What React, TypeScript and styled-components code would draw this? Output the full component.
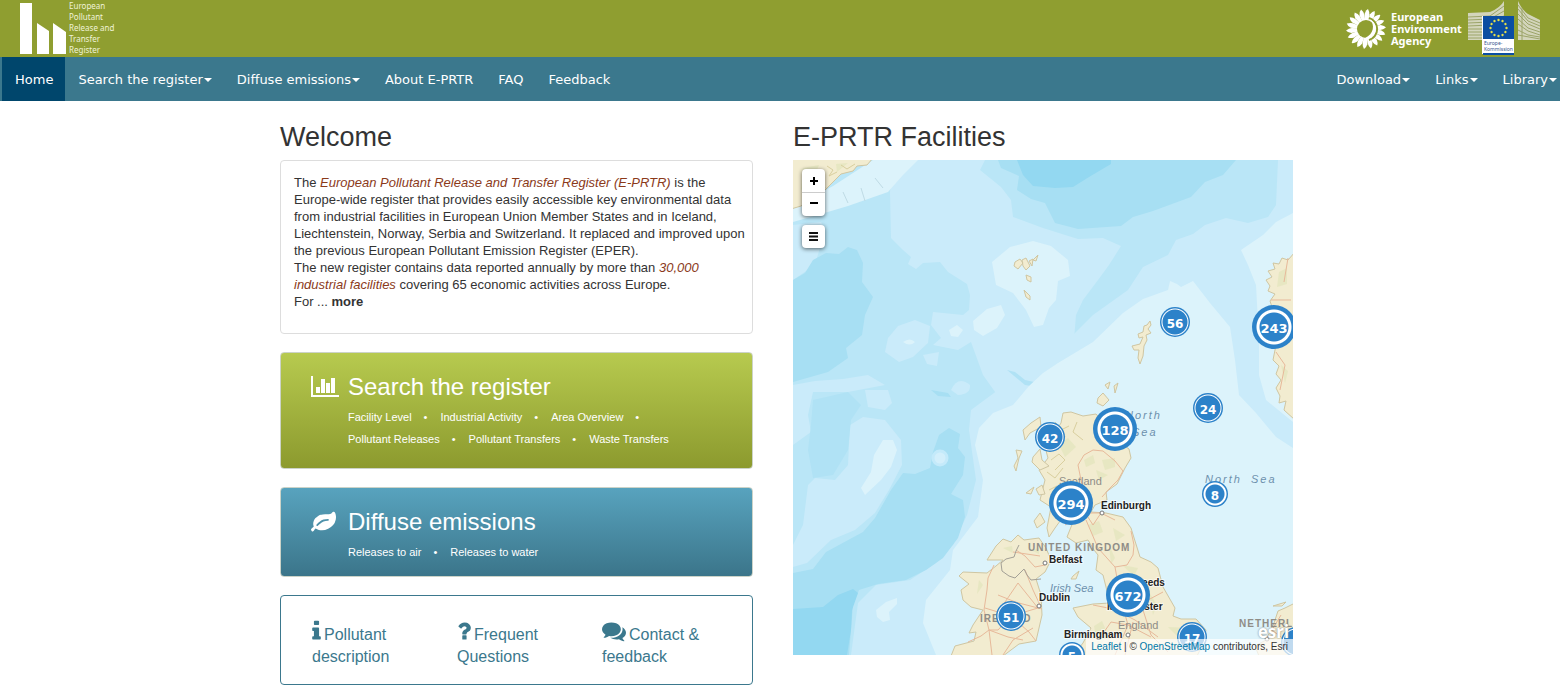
import React from 'react';
import styled, { createGlobalStyle } from 'styled-components';

const GlobalStyle = createGlobalStyle`
  * { box-sizing: border-box; }
  body { margin: 0; background: #fff; color: #333; font: 13px/17px "Liberation Sans", Arial, sans-serif; }
  a { color: inherit; text-decoration: none; }
  ul { list-style: none; margin: 0; padding: 0; }
`;

const Header = styled.header`
  display: flex;
  justify-content: space-between;
  align-items: flex-start;
  height: 57px;
  padding: 0 18px 0 20px;
  background: #8f9e30;
  color: #fff;
`;
const Brand = styled.a`
  display: flex;
  gap: 3px;
  font: 8px/11px "Noto Sans", sans-serif;
  color: #f0f3d8;
`;
const BrandText = styled.span`
  width: 48px;
`;
const Partners = styled.div`
  display: flex;
  align-items: flex-start;
`;
const Agency = styled.a`
  display: flex;
  gap: 5px;
  padding-top: 7px;
  font: bold 11px/12px "Noto Sans", sans-serif;
`;
const AgencyText = styled.span`
  width: 77px;
  padding-top: 4px;
`;

const Nav = styled.nav`
  display: flex;
  justify-content: space-between;
  height: 44px;
  padding-left: 2px;
  background: #3b788d;
`;
const NavGroup = styled.div<{ $tight?: boolean }>`
  display: flex;
  margin-right: ${p => (p.$tight ? '-9px' : '0')};
`;
const NavLink = styled.a<{ $active?: boolean }>`
  display: flex;
  align-items: center;
  gap: 1px;
  padding: 2px 12px 0 13px;
  background: ${p => (p.$active ? '#00466c' : 'transparent')};
  color: #fff;
  font: 13px/20px "DejaVu Sans", Verdana, sans-serif;
  white-space: nowrap;
`;
const Caret = styled.span`
  border: 4px solid transparent;
  border-top-color: #fff;
  border-bottom: 0;
`;

const Main = styled.main`
  display: grid;
  grid-template-columns: 473fr 500fr;
  gap: 40px;
  max-width: 1170px;
  margin: 0 auto;
  padding: 21px 72px 6px 85px;
`;
const Column = styled.section`
  display: flex;
  flex-direction: column;
  min-width: 0;
`;
const Heading = styled.h1`
  margin: 0 0 8px;
  font-size: 27px;
  line-height: 30px;
  font-weight: 400;
`;
const Stack = styled.div`
  display: flex;
  flex-direction: column;
  gap: 18px;
`;
const Intro = styled.div`
  padding: 13px 5px 23px 13px;
  border: 1px solid #ddd;
  border-radius: 4px;
  p { margin: 0; }
  em { color: #8b3a1a; }
`;
const Feature = styled.section<{ $from: string; $to: string; $bottom: number }>`
  padding: 20px 30px ${p => p.$bottom}px;
  border: 1px solid #ccd3c8;
  border-radius: 4px;
  background: linear-gradient(${p => p.$from}, ${p => p.$to});
  color: #fff;
`;
const FeatureTitle = styled.h2`
  display: flex;
  align-items: center;
  margin: 0 0 5px;
  font-size: 24px;
  line-height: 28px;
  font-weight: 400;
`;
const IconSlot = styled.span`
  display: flex;
  width: 37px;
`;
const FeatureLinks = styled.ul`
  padding-left: 37px;
  font-size: 11px;
  line-height: 22px;
  li { display: inline-block; }
  li:not(:last-child)::after { content: "•"; margin: 0 13px 0 12px; }
`;
const HelpPanel = styled.ul`
  display: grid;
  grid-template-columns: repeat(3, 1fr);
  padding: 23px 5px 16px 31px;
  border: 1px solid #3b788d;
  border-radius: 4px;
  color: #3b788d;
  font-size: 16px;
  line-height: 22px;
  svg { height: 24px; margin-right: 3px; vertical-align: -3px; }
`;

const MapBox = styled.div`
  position: relative;
  height: 495px;
  overflow: hidden;
  background: #bae6f7;
`;
const MapArt = styled.svg`
  display: block;
  width: 100%;
  height: 100%;
`;
const MapControls = styled.div`
  position: absolute;
  top: 9px;
  left: 9px;
  display: flex;
  flex-direction: column;
  gap: 9px;
`;
const ControlGroup = styled.div`
  width: 23px;
  border-radius: 4px;
  background: #fff;
  box-shadow: 0 1px 4px rgba(0, 0, 0, 0.6);
`;
const ControlButton = styled.button`
  display: flex;
  align-items: center;
  justify-content: center;
  width: 23px;
  height: 23px;
  padding: 0;
  border: 0;
  background: none;
  color: #000;
  & + & { border-top: 1px solid #ccc; height: 24px; }
`;
const Cluster = styled.button<{ $x: number; $y: number; $r: number; $kind: Kind }>`
  position: absolute;
  left: ${p => p.$x - p.$r}px;
  top: ${p => p.$y - p.$r}px;
  display: flex;
  align-items: center;
  justify-content: center;
  width: ${p => p.$r * 2}px;
  height: ${p => p.$r * 2}px;
  padding: 3px 0 0;
  border: 0;
  border-radius: 50%;
  color: #fff;
  font: bold ${p => (p.$kind === 'large' ? 13 : 12)}px/14px "DejaVu Sans", Verdana, sans-serif;
  background: ${p => rings[p.$kind]};
`;
const EsriMark = styled.span`
  position: absolute;
  right: 4px;
  bottom: 12px;
  color: #fff;
  font: bold 17px/22px "Noto Sans", sans-serif;
  text-shadow: 0 0 2px #777;
`;
const Attribution = styled.div`
  position: absolute;
  right: 0;
  bottom: 0;
  padding: 0 5px;
  background: rgba(255, 255, 255, 0.7);
  font-size: 10px;
  line-height: 16px;
  white-space: nowrap;
  a { color: #0078a8; }
`;

type Kind = 'small' | 'medium' | 'large';
const blue = '#2c82c9';
const rings: Record<Kind, string> = {
  small: `radial-gradient(circle closest-side, ${blue} 9px, #fff 10px, #fff 11px, ${blue} 12px)`,
  medium: `radial-gradient(circle closest-side, ${blue} 12px, #fff 13px, #fff 13px, ${blue} 14px)`,
  large: `radial-gradient(circle closest-side, ${blue} 14px, #fff 15px, #fff 17px, ${blue} 18px)`,
};
const radius: Record<Kind, number> = { small: 13, medium: 15, large: 22 };

const clusters: { n: string; x: number; y: number; kind: Kind }[] = [
  { n: '56', x: 382, y: 162, kind: 'medium' },
  { n: '243', x: 481, y: 167, kind: 'large' },
  { n: '24', x: 415, y: 248, kind: 'medium' },
  { n: '128', x: 322, y: 269, kind: 'large' },
  { n: '42', x: 257, y: 277, kind: 'medium' },
  { n: '8', x: 422, y: 334, kind: 'small' },
  { n: '294', x: 278, y: 343, kind: 'large' },
  { n: '672', x: 335, y: 435, kind: 'large' },
  { n: '51', x: 218, y: 456, kind: 'medium' },
  { n: '17', x: 399, y: 477, kind: 'medium' },
  { n: '5', x: 279, y: 495, kind: 'small' },
  { n: '', x: 503, y: 482, kind: 'medium' },
];

const Chimneys = () => (
  <svg width="46" height="57" viewBox="0 0 46 57" fill="#fff" aria-hidden="true">
    <path d="M0 3h12v51H0zM17 23l12 8v23H17zM33 23l13 9v22H33z" />
  </svg>
);

const Sunflower = () => (
  <svg width="40" height="44" viewBox="-20 -22 40 44" fill="#fff" aria-hidden="true">
    {Array.from({ length: 18 }, (_, i) => (
      <path key={i} d="M-1.6-8L-2.4-15Q-1.4-19 0.6-20Q2.6-17 2.4-14L1.6-8Z" transform={`rotate(${i * 20 + 4})`} />
    ))}
    <circle r="9" fill="#8f9e30" />
    <path d="M3-11A11.500 11.500 0 0 1 3 11" fill="none" stroke="#8f9e30" strokeWidth="2" />
    <path d="M4-10C12-5 12 6 2 10L-1 9C8 5 9-4 4-10Z" />
  </svg>
);

const Commission = () => (
  <svg width="74" height="56" viewBox="0 0 74 56" role="img" aria-label="Europe-Kommission">
    <path d="M0 13L22 12Q32 8 36 1V40H0ZM50 1Q54 10 60 14L72 20V40H50Z" fill="#d3d5bb" />
    <g fill="none" stroke="#9ca469" strokeWidth="1">
      <path d="M0 17L22 16L36 6M0 20L22 19L36 11M0 23L22 22L36 16M0 26L22 25L36 20M0 29H36M0 32H36M0 35H36M0 38H36" />
      <path d="M50 5L60 18L72 23M50 9L60 21L72 26M50 14L60 24L72 29M50 19L60 28L72 32M50 24L60 31L72 35M50 30L60 35L72 37M50 35L72 39M54 8V40" />
    </g>
    <path d="M14 16H46V54H14Z" fill="#fff" />
    <path d="M15 16H46V39H15ZM15 53H46V55H15Z" fill="#0b4ea2" />
    {Array.from({ length: 12 }, (_, i) => (
      <circle key={i} cx="30.5" cy="20" r="1.2" fill="#e6e04a" transform={`rotate(${i * 30} 30.5 28)`} />
    ))}
    <g fill="#35538c" fontFamily="Noto Sans, sans-serif" fontSize="5">
      <text x="16" y="45">Europe-</text>
      <text x="16" y="51">Kommission</text>
    </g>
  </svg>
);

const BarsIcon = () => (
  <svg width="28" height="22" viewBox="0 0 28 22" fill="#fff" aria-hidden="true">
    <path d="M0 0H2V19H28V21H0ZM5 11H9V17H5ZM10 3H14V17H10ZM15 7H19V17H15ZM20 2H24V17H20Z" />
  </svg>
);
const LeafIcon = () => (
  <svg width="25" height="25" viewBox="0 0 1792 1792" fill="#fff" aria-hidden="true">
    <path d="M1280 704q0-26-19-45t-45-19q-172 0-318 49.5t-259.5 134-235.5 219.5q-19 21-19 45 0 26 19 45t45 19q24 0 45-19 27-24 74-71t67-66q137-124 268.5-176t313.5-52q26 0 45-19t19-45zm512-198q0 95-20 193-46 224-184.5 383t-357.5 268q-214 108-438 108-148 0-286-47-15-5-88-42t-96-37q-16 0-39.5 32t-45 70-52.5 70-60 32q-43 0-63.5-17.5t-45.5-59.5q-2-4-6-11t-5.5-10-3-9.5-1.5-13.5q0-35 31-73.5t68-65.5 68-56 31-48q0-4-14-38t-16-44q-9-51-9-104 0-115 43.5-220t119-184.5 170.5-139 204-95.5q55-18 145-25.5t179.5-9 178.5-6 163.5-24 113.5-56.5l29.5-29.5 29.5-28 27-20 36.5-16 43.5-4.5q39 0 70.5 46t47.5 112 24 124 8 96z" />
  </svg>
);
const InfoIcon = () => (
  <svg width="9" viewBox="576 0 640 1792" fill="currentColor" aria-hidden="true">
    <path d="M1216 1344v128q0 26-19 45t-45 19h-512q-26 0-45-19t-19-45v-128q0-26 19-45t45-19h64v-384h-64q-26 0-45-19t-19-45v-128q0-26 19-45t45-19h384q26 0 45 19t19 45v576h64q26 0 45 19t19 45zm-128-1152v192q0 26-19 45t-45 19h-256q-26 0-45-19t-19-45v-192q0-26 19-45t45-19h256q26 0 45 19t19 45z" />
  </svg>
);
const QuestionIcon = () => (
  <svg width="14" viewBox="384 0 1024 1792" fill="currentColor" aria-hidden="true">
    <path d="M1088 1256v240q0 16-12 28t-28 12h-240q-16 0-28-12t-12-28v-240q0-16 12-28t28-12h240q16 0 28 12t12 28zm316-600q0 54-15.5 101t-35 76.5-55 59.5-57.5 43.5-61 35.5q-41 23-68.5 65t-27.5 67q0 17-12 32.5t-28 15.5h-240q-15 0-25.5-18.5t-10.5-37.5v-45q0-83 65-156.5t143-108.5q59-27 84-56t25-76q0-42-46.5-74t-107.5-32q-65 0-108 29-35 25-107 115-13 16-31 16-12 0-25-8l-164-125q-13-10-15.5-25t5.5-28q160-266 464-266 80 0 161 31t146 83 106 127.5 41 158.5z" />
  </svg>
);
const CommentsIcon = () => (
  <svg width="24" viewBox="0 0 1792 1792" fill="currentColor" aria-hidden="true">
    <path d="M1408 768q0 139-94 257t-256.5 186.5-353.5 68.5q-86 0-176-16-124 88-278 128-36 9-86 16h-3q-11 0-20.5-8t-11.5-21q-1-3-1-6.5t.5-6.5 2-6l2.5-5 3.5-5.5 4-5 4.5-5 4-4.5q5-6 23-25t26-29.5 22.5-29 25-38.5 20.5-44q-124-72-195-177t-71-224q0-139 94-257t256.5-186.5 353.5-68.5 353.5 68.5 256.5 186.5 94 257zm384 256q0 120-71 224.5t-195 176.5q10 24 20.5 44t25 38.5 22.5 29 26 29.5 23 25q1 1 4 4.5t4.5 5 4 5 3.5 5.5l2.5 5 2 6 .5 6.5-1 6.5q-3 14-13 22t-22 7q-50-7-86-16-154-40-278-128-90 16-176 16-271 0-472-132 58 4 88 4 161 0 309-45t264-129q125-92 192-212t67-254q0-77-23-152 129 71 204 178t75 230z" />
  </svg>
);

const SeaMap = () => (
  <MapArt viewBox="0 0 500 495" preserveAspectRatio="xMinYMin slice" role="img" aria-label="Map of the North Sea region">
    <rect width="500" height="495" fill="#bae6f7" />
    {/* mid-depth water */}
    <g fill="#caebfa">
      <path d="M100 0L97 32L98 78L110 90L118 97L115 104L123 109L130 103L147 102L155 112L174 124L177 135L176 150L170 155L140 152L138 165L148 178L140 185L165 190L178 182L190 215L205 236L223 246L235 232L228 222L250 220L270 196L281 180L283 155L290 140L305 120L316 105L328 86L310 78L285 79L250 68L220 57L218 40L208 27L187 10L192 0Z" />
      <path d="M500 0H485L483 45L475 57L455 63L433 58L412 65L400 74L383 80L375 95L350 107L335 130L300 155L280 175L250 195L230 216L205 230L178 250L176 270L183 320L174 355L160 385L143 403L117 420L83 425L65 443L58 495H500Z" />
      <path d="M57 265L70 257L92 260L108 280L109 305L96 330L82 353L62 370L38 380L14 403L0 407V385L10 365L15 325L22 318L42 320L55 305Z" />
      <path d="M72 230L95 230L99 243L92 250L75 247ZM92 192L95 178L105 166L122 160L137 166L135 183L120 197L106 202ZM130 195L146 192L144 206L134 204ZM0 225L22 221L50 219L75 215L92 225L55 232L20 232L15 255L18 272L0 285ZM0 65L28 62L32 70L22 105L0 120Z" />
      <path d="M158 230Q165 215 177 225Q178 234 165 235Z" />
      <circle cx="36" cy="308" r="3" />
    </g>
    {/* deep water */}
    <g fill="#a7dff3">
      <path d="M0 120L12 113L20 100L33 93L46 94L55 87L64 90L70 103L69 122L80 137L72 155L69 175L53 188L55 198L35 212L0 222Z" />
      <path d="M110 313L122 314L137 308L140 292L146 275L156 268L167 274L165 288L172 297L170 315L158 334L170 340L172 357L165 378L150 398L133 410L113 420L85 424L66 430L60 445L56 495H0V413L20 409L33 392L70 372L82 358L98 330Z" />
      <path d="M205 0L208 8L226 16L224 30L238 39L252 43L262 63L285 69L328 66L340 57L360 51L398 37L412 22L430 15L443 0Z" />
      <path d="M138 230L155 233L158 237L145 236Z" />
    </g>
    <path d="M20 240L55 232L68 245L58 260L55 290L40 315L20 318L15 290L18 265ZM214 210L222 212L232 220L250 224L250 228L232 225Z" fill="#b0e2f5" />
    <g fill="#93d8f1">
      <path d="M0 449L30 447L45 435L60 429L65 433L59 450L58 470L54 495H0Z" />
      <path d="M224 0L230 15L240 26L262 28L280 27L296 17L318 4L318 0Z" />
    </g>
    {/* continental shelf and banks */}
    <g fill="#dcf3fb">
      <path d="M0 48L0 62L28 54L55 46L95 32L110 15L125 0H80L40 26Z" />
      <path d="M500 53L483 62L470 75L448 90L455 105L463 125L466 180L466 215L473 240L500 262ZM250 213L265 203L300 182L330 153L350 139L375 130L377 121L384 124L388 127L400 121L417 143L437 167L442 200L446 235L463 253L483 277L500 288V495H143L130 463L133 440L157 410L160 390L185 357L190 320L182 285L186 268L200 253L220 245L236 226Z" />
      <path d="M199 102L217 87L240 81L258 86L275 100L277 116L265 121L263 140L256 148L250 165L241 167L233 150L220 133L203 125ZM180 161L194 149L208 145L212 155L204 168L190 176L181 170ZM81 295L90 280L100 280L104 290L98 307L88 320L72 335L68 328L78 312ZM83 450L93 442L104 438L104 444L96 452L97 460L90 462L84 457ZM156 170L164 165L170 170L165 177L158 176ZM110 182Q117 177 122 182Q117 187 110 182Z" />
      <circle cx="147" cy="298" r="7" fill="#d3effb" stroke="#c4eafa" strokeWidth="3" />
    </g>
    <path d="M50 32L55 43M68 28L72 41M82 18L90 28" stroke="#bfdbe5" fill="none" />
    {/* land */}
    <g fill="#f2ecd0" stroke="#cfc6a2" strokeWidth="1" strokeLinejoin="round">
      <path d="M-2-2H80L74 5L64 6L60 11L48 14L40 22L30 32L20 38L8 46L-2 49Z" />
      <path d="M270 253L278 252L290 256L303 254L312 264L325 281L336 289L338 298L332 308L324 324L313 332L314 340L302 345L298 352L313 353L330 357L338 368L342 381L347 397L358 402L365 408L370 427L382 448L380 456L388 459L403 459L413 470L411 482L404 496H280L290 483L298 468L285 457L280 448L300 444L317 443L313 427L310 415L303 410L305 395L301 390L295 380L283 383L274 377L280 362L270 357L262 368L256 377L254 368L258 347L247 340L252 320L246 310L255 298L252 287L262 272L268 263Z" />
      <path d="M194 400L203 386L210 379L218 382L225 375L231 380L246 378L253 388L258 400L252 412L243 419L248 435L249 455L243 481L226 484L210 496H158L162 486L181 481L183 472L176 473L180 465L190 450L178 447L170 440L168 430L176 424L166 416L170 412L194 413L203 406L210 400Z" />
      <path d="M230 270L238 263L247 257L248 267L237 273L232 280ZM223 290L229 291L226 298L223 311L221 306L225 298ZM240 297L247 289L249 300L256 306L247 310L239 302ZM243 329L249 325L252 334L246 335ZM241 361L247 353L252 362L244 368ZM233 333L241 327L238 334ZM280 416L286 411L283 419L278 419ZM305 238L310 233L316 240L310 246L304 243ZM312 225L317 222L315 229ZM321 226L325 223L322 233Z" />
      <path d="M357 161L354 165L351 166L350 172L345 174L346 178L350 177L347 184L339 186L341 190L346 190L345 198L347 204L350 196L351 186L354 180L353 175L358 173L355 169L358 165ZM222 102L227 99L230 103L225 109L221 106ZM229 100L233 98L237 106L233 110L230 106ZM236 101L240 99L239 106ZM240 100L245 95L243 101ZM233 115L238 117L238 122L234 120ZM231 130L237 136L237 140L233 137Z" />
      <path d="M502 92L495 100L489 98L486 104L480 103L482 109L475 111L479 117L473 120L477 126L475 131L482 134L477 141L480 150L483 160L484 180L480 200L486 206L483 214L488 220L483 228L487 236L486 243L493 241L491 250L502 260Z" />
      <path d="M502 443L492 448L485 451L481 463L473 480L462 486L466 496H502ZM480 446L493 442L489 446Z" />
    </g>
    {/* upland shading */}
    <g fill="#dfe3b7" opacity=".55">
      <path d="M291 300L300 295L302 303L293 307ZM309 300L322 298L322 307L312 310ZM303 310L315 315L306 320ZM266 285L275 278L283 287L272 297ZM295 365L306 361L310 372L300 376ZM320 368L332 375L323 381ZM316 385L322 398L318 404ZM329 405L345 408L341 416ZM210 388L219 386L220 393ZM238 390L246 388L246 394ZM301 466L309 461L315 475L305 488ZM186 420L190 425L184 434ZM356 432L364 445L360 455ZM375 467L400 468L390 482Z" />
      <path d="M486 112L494 108L494 124L484 127ZM488 205L495 211L492 223Z" />
      <path d="M10 8L26 5L20 20L8 30ZM43 4L55 3L44 12Z" />
    </g>
    <path d="M262 262L268 270L276 266M258 300L266 294L272 300L262 310M254 312L262 318L270 308M260 286L268 284L272 276M284 262L280 272L290 280M256 330L264 326L268 332M34 6L40 10L36 16L44 12M20 26L28 20L32 28M48 5L54 9L62 4" fill="none" stroke="#d9cf9f" strokeWidth="1" />
    {/* roads and borders */}
    <g fill="none" stroke="#e7b99a" strokeWidth="1" strokeLinejoin="round">
      <path d="M290 330L285 305L291 295L300 290L310 291L322 301L330 311L325 320L317 328L309 337M272 365L290 353L308 353L322 360M308 353L300 365L293 354M293 360L305 388L322 407L328 440L335 465M338 371L341 385L340 395L334 405L322 407M317 442L340 448L370 432M300 445L320 449L342 460L365 477M335 465L322 495M340 462L332 495M350 450L358 475L375 492M309 475L318 462L335 465L358 477" />
      <path d="M201 405L195 418L194 430L191 450L196 470L199 495M225 423L210 445L218 456M225 423L245 448L218 456L192 448M218 456L205 470L196 470M218 456L236 472L243 481M249 449L222 442M196 470L215 477L230 480M210 495L220 480L240 468M223 390L232 396L242 407L252 405M220 392L247 396M232 410L240 430L247 445M175 482L188 476L196 470M205 435L225 443" />
      <path d="M478 140H498M483 192L492 205L487 230M495 98L491 122M488 455L479 470L492 480" />
    </g>
    <path d="M226 385L223 391L221 397L213 399L208 403L209 411L216 416L222 418L227 413L231 409L234 415L238 420L248 419" fill="none" stroke="#a3a096" strokeWidth="1" />
    {/* place names */}
    <g fontFamily="Liberation Sans, Arial, sans-serif">
      <g fill="#6d90ad" fontStyle="italic">
        <text x="332" y="259" fontSize="11" letterSpacing="2">North</text>
        <text x="339" y="276" fontSize="11" letterSpacing="2">Sea</text>
        <text x="412" y="323" fontSize="11" letterSpacing="2">North</text>
        <text x="458" y="323" fontSize="11" letterSpacing="2">Sea</text>
        <text x="257" y="432" fontSize="11">Irish Sea</text>
      </g>
      <g fill="#8f8d87">
        <text x="266" y="325" fontSize="11">Scotland</text>
        <text x="325" y="469" fontSize="11">England</text>
        <g fontSize="10" fontWeight="bold" letterSpacing="1">
          <text x="235" y="391">UNITED KINGDOM</text>
          <text x="187" y="462">IRELAND</text>
          <text x="446" y="467">NETHERLANDS</text>
        </g>
      </g>
      <g fill="#222" fontSize="10" fontWeight="bold" stroke="#fff" strokeOpacity=".6" strokeWidth="2" paintOrder="stroke">
        <text x="308" y="349">Edinburgh</text>
        <text x="256" y="403">Belfast</text>
        <text x="246" y="441">Dublin</text>
        <text x="343" y="426">Leeds</text>
        <text x="314" y="450">Manchester</text>
        <text x="271" y="478">Birmingham</text>
      </g>
    </g>
    <g fill="#fff" stroke="#777" strokeWidth="1">
      <circle cx="309" cy="353" r="2" />
      <circle cx="252" cy="403" r="2" />
      <circle cx="246" cy="446" r="2" />
      <circle cx="335" cy="475" r="2" />
      <circle cx="474" cy="479" r="2" />
    </g>
  </MapArt>
);

const NavItem = ({ label, menu, active }: { label: string; menu?: boolean; active?: boolean }) => (
  <NavLink href="#" $active={active} aria-current={active ? 'page' : undefined}>
    {label}
    {menu && <Caret />}
  </NavLink>
);

const LinkList = ({ items }: { items: string[] }) => (
  <FeatureLinks>
    {items.map(item => (
      <li key={item}><a href="#">{item}</a></li>
    ))}
  </FeatureLinks>
);

export default function App() {
  return (
    <>
      <GlobalStyle />
      <Header>
        <Brand href="#">
          <Chimneys />
          <BrandText>European Pollutant Release and Transfer Register</BrandText>
        </Brand>
        <Partners>
          <Agency href="#">
            <Sunflower />
            <AgencyText>European Environment Agency</AgencyText>
          </Agency>
          <Commission />
        </Partners>
      </Header>
      <Nav>
        <NavGroup>
          <NavItem label="Home" active />
          <NavItem label="Search the register" menu />
          <NavItem label="Diffuse emissions" menu />
          <NavItem label="About E-PRTR" />
          <NavItem label="FAQ" />
          <NavItem label="Feedback" />
        </NavGroup>
        <NavGroup $tight>
          <NavItem label="Download" menu />
          <NavItem label="Links" menu />
          <NavItem label="Library" menu />
        </NavGroup>
      </Nav>
      <Main>
        <Column>
          <Heading>Welcome</Heading>
          <Stack>
            <Intro>
              <p>
                The <a href="#"><em>European Pollutant Release and Transfer Register (E-PRTR)</em></a> is the
                Europe-wide register that provides easily accessible key environmental data from industrial
                facilities in European Union Member States and in Iceland, Liechtenstein, Norway, Serbia and
                Switzerland. It replaced and improved upon the previous European Pollutant Emission Register (EPER).
              </p>
              <p>
                The new register contains data reported annually by more than{' '}
                <a href="#"><em>30,000 industrial facilities</em></a> covering 65 economic activities across Europe.
              </p>
              <p>For ... <a href="#"><b>more</b></a></p>
            </Intro>
            <Feature $from="#b7ca4f" $to="#8c9a2e" $bottom={18}>
              <FeatureTitle><IconSlot><BarsIcon /></IconSlot><a href="#">Search the register</a></FeatureTitle>
              <LinkList
                items={['Facility Level', 'Industrial Activity', 'Area Overview', 'Pollutant Releases', 'Pollutant Transfers', 'Waste Transfers']}
              />
            </Feature>
            <Feature $from="#58a3be" $to="#3b758a" $bottom={13}>
              <FeatureTitle><IconSlot><LeafIcon /></IconSlot><a href="#">Diffuse emissions</a></FeatureTitle>
              <LinkList items={['Releases to air', 'Releases to water']} />
            </Feature>
            <HelpPanel>
              <li><a href="#"><InfoIcon />Pollutant<br />description</a></li>
              <li><a href="#"><QuestionIcon />Frequent<br />Questions</a></li>
              <li><a href="#"><CommentsIcon />Contact &amp;<br />feedback</a></li>
            </HelpPanel>
          </Stack>
        </Column>
        <Column>
          <Heading as="h2">E-PRTR Facilities</Heading>
          <MapBox>
            <SeaMap />
            {clusters.map(c => (
              <Cluster key={`${c.x}-${c.y}`} $x={c.x} $y={c.y} $r={radius[c.kind]} $kind={c.kind} aria-label={`${c.n} facilities`}>
                {c.n}
              </Cluster>
            ))}
            <MapControls>
              <ControlGroup>
                <ControlButton aria-label="Zoom in">
                  <svg width="10" height="10" viewBox="0 0 10 10"><path d="M1 5H9M5 1V9" stroke="#000" strokeWidth="2" /></svg>
                </ControlButton>
                <ControlButton aria-label="Zoom out">
                  <svg width="10" height="10" viewBox="0 0 10 10"><path d="M1 3H9" stroke="#000" strokeWidth="2" /></svg>
                </ControlButton>
              </ControlGroup>
              <ControlGroup>
                <ControlButton aria-label="Layers">
                  <svg width="9" height="9" viewBox="0 0 9 9"><path d="M0 1H9M0 4.5H9M0 8H9" stroke="#111" strokeWidth="2" /></svg>
                </ControlButton>
              </ControlGroup>
            </MapControls>
            <EsriMark>esri</EsriMark>
            <Attribution>
              <a href="#">Leaflet</a> | © <a href="#">OpenStreetMap</a> contributors, Esri
            </Attribution>
          </MapBox>
        </Column>
      </Main>
    </>
  );
}
